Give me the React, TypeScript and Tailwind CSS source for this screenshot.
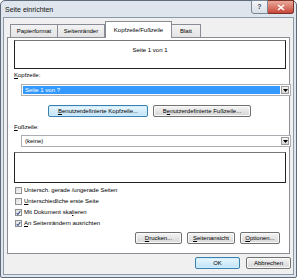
import clsx from 'clsx'

function Btn({ children, className, focus }: { children: React.ReactNode; className: string; focus?: boolean }) {
  return (
    <div
      className={clsx(
        'h-[12px] flex items-center justify-center rounded-[2px] border leading-none',
        focus
          ? 'border-[#3c7fb1] bg-linear-to-b from-[#eaf6fd] to-[#bfe3f8] shadow-[inset_0_0_0_1px_#cfeefc]'
          : 'border-[#707070] bg-linear-to-b from-[#f4f4f4] to-[#d6d6d6] shadow-[inset_0_0_0_1px_#fafafa]',
        className
      )}
    >
      {children}
    </div>
  )
}

function Check({ checked, children }: { checked?: boolean; children: React.ReactNode }) {
  return (
    <div className="h-[11px] flex items-center pl-[7px] gap-[2px]">
      <div className="w-[7px] h-[7px] border border-[#8e8f8f] bg-linear-to-br from-[#dcdcdc] to-[#fbfbfb] flex items-center justify-center">
        {checked && (
          <svg width="6" height="6" viewBox="0 0 6 6">
            <path d="M0.8 3.1 L2.3 4.8 L5.2 0.8" fill="none" stroke="#3b4f8f" strokeWidth="1.3" />
          </svg>
        )}
      </div>
      <span>{children}</span>
    </div>
  )
}

function Select({ children, selected }: { children: React.ReactNode; selected?: boolean }) {
  return (
    <div className="ml-[7px] w-[270px] h-[12px] border border-[#abadb3] bg-white flex items-stretch p-[1px]">
      <div className={clsx('flex-1 flex items-center pl-[2px]', selected && 'bg-[#3399ff] text-white')}>{children}</div>
      <div className="w-[8px] ml-[1px] border border-[#9a9a9a] bg-linear-to-b from-[#f4f4f4] to-[#d8d8d8] flex items-center justify-center">
        <svg width="5" height="3" viewBox="0 0 5 3">
          <path d="M0 0 H5 L2.5 3 Z" fill="#000" />
        </svg>
      </div>
    </div>
  )
}

export default function App() {
  return (
    <div className="w-[300px] h-[279px] bg-white font-['Liberation_Sans',Arial,sans-serif] text-[6px] text-black">
      <div className="w-[297px] h-[278px] border border-[#5f6b78] rounded-t-[5px] rounded-b-[2px] bg-[#dfe5ec] flex flex-col">

        {/* Title bar */}
        <div className="h-[16px] flex items-start justify-between">
          <span className="pl-[4px] pt-[4px] text-[7px] leading-[9px] text-[#111]">Seite einrichten</span>
          <div className="flex -mt-[1px] mr-[2px]">
            <div className="w-[17px] h-[14px] border border-[#7a8896] rounded-bl-[3px] bg-linear-to-b from-[#f4f6f8] to-[#d9dfe6] flex items-center justify-center text-[7px] font-bold text-[#3d4a5a]">
              ?
            </div>
            <div className="w-[26px] h-[14px] border border-[#7a3228] border-l-0 rounded-br-[3px] bg-linear-to-b from-[#e9a99b] to-[#c6463a] flex items-center justify-center">
              <svg width="8" height="7" viewBox="0 0 8 7">
                <path d="M1 1 L7 6 M7 1 L1 6" stroke="#fff" strokeWidth="1.6" />
              </svg>
            </div>
          </div>
        </div>

        {/* Client area */}
        <div className="flex-1 mx-[2px] mb-[2px] border border-[#8d99a6] bg-[#f0f0f0] flex flex-col">

          {/* Tabs */}
          <div className="h-[16px] mt-[3px] pl-[6px] flex items-end relative z-10">
            <div className="w-[48px] h-[13px] border border-b-0 border-[#898c95] bg-linear-to-b from-[#f3f3f3] to-[#e3e3e3] flex items-center justify-center">Papierformat</div>
            <div className="w-[47px] h-[13px] border border-b-0 border-l-0 border-[#898c95] bg-linear-to-b from-[#f3f3f3] to-[#e3e3e3] flex items-center justify-center">Seitenränder</div>
            <div className="w-[67px] h-[17px] -mb-[1px] border border-b-0 border-[#898c95] bg-white flex items-start pt-[4px] justify-center">Kopfzeile/Fußzeile</div>
            <div className="w-[29px] h-[13px] border border-b-0 border-l-0 border-[#898c95] bg-linear-to-b from-[#f3f3f3] to-[#e3e3e3] flex items-center justify-center">Blatt</div>
          </div>

          {/* Tab panel */}
          <div className="ml-[3px] w-[283px] h-[217px] border border-[#898c95] bg-white flex flex-col pl-[6px] pr-[3px]">
            <div className="mt-[2px] h-[29px] border border-[#222] border-t-[#777] flex justify-center pt-[5px]">Seite 1 von 1</div>

            <div className="mt-[1px] h-[10px] flex items-center"><span><u>K</u>opfzeile:</span></div>
            <div className="mt-[4px]"><Select selected>Seite 1 von ?</Select></div>

            <div className="mt-[9px] ml-[34px] flex gap-[5px]">
              <Btn className="w-[100px]" focus><span><u>B</u>enutzerdefinierte Kopfzeile...</span></Btn>
              <Btn className="w-[98px]"><span>B<u>e</u>nutzerdefinierte Fußzeile...</span></Btn>
            </div>

            <div className="mt-[5px] h-[10px] flex items-center"><span><u>F</u>ußzeile:</span></div>
            <div className="mt-[3px]"><Select>(keine)</Select></div>

            <div className="mt-[5px] h-[31px] border border-[#222] border-t-[#777]" />

            <div className="mt-[2px] -ml-[6px] flex flex-col">
              <Check>Untersch. gerade /ungerade Seiten</Check>
              <Check><u>U</u>nterschiedliche erste Seite</Check>
              <Check checked>Mit Dokument ska<u>l</u>ieren</Check>
              <Check checked><u>A</u>n Seitenrändern ausrichten</Check>
            </div>

            <div className="mt-[3px] flex justify-end pr-[6px] gap-[5px]">
              <Btn className="w-[47px]"><span><u>D</u>rucken...</span></Btn>
              <Btn className="w-[48px]"><span><u>S</u>eitenansicht</span></Btn>
              <Btn className="w-[40px]"><span><u>O</u>ptionen...</span></Btn>
            </div>
          </div>

          {/* Dialog buttons */}
          <div className="mt-[3px] flex justify-end pr-[2px] gap-[6px]">
            <Btn className="w-[45px]" focus>OK</Btn>
            <Btn className="w-[45px]">Abbrechen</Btn>
          </div>
        </div>
      </div>
    </div>
  )
}
